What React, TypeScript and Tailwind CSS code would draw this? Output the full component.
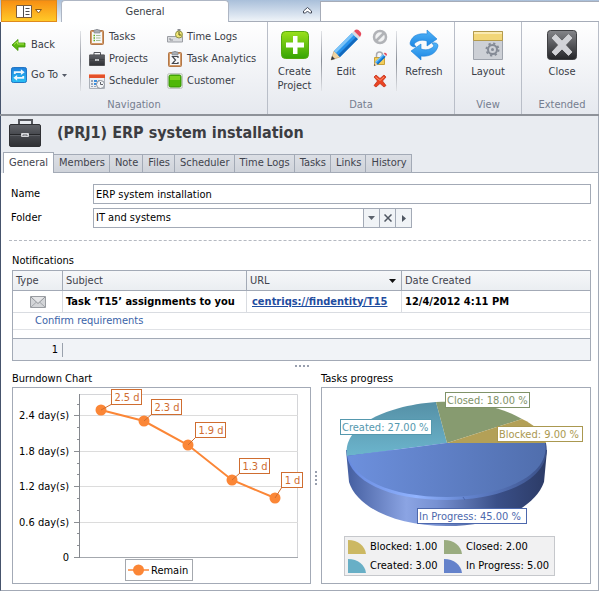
import React, { useState } from 'react'

const remaining = [2.5, 2.3, 1.9, 1.3, 1]
const burndown = [
  { x: 88, lx: 98, ly: 1, w: 30 },
  { x: 131, lx: 138, ly: 11, w: 30 },
  { x: 175, lx: 182, ly: 34, w: 30 },
  { x: 219, lx: 226, ly: 70, w: 30 },
  { x: 262, lx: 268, ly: 84, w: 21 },
]
const ticks = [2.4, 1.8, 1.2, 0.6, 0]
const minorTicks = [2.6, 2.2, 2, 1.6, 1.4, 1, 0.8, 0.4, 0.2]
const pages = ['General', 'Members', 'Note', 'Files', 'Scheduler', 'Time Logs', 'Tasks', 'Links', 'History']

const toY = (v: number) => Math.round(169 - v * 59)

const BackIcon = () => (
  <svg width="16" height="16" viewBox="0 0 16 16" className="shrink-0">
    <path d="M1 8 7 2.500V6h7v4H7v3.500Z" fill="#5cb811" stroke="#3d9200" strokeWidth=".8" />
    <path d="M3 7.500 6.500 4.500V7H13" fill="none" stroke="#a6e34f" />
  </svg>
)

const GoToIcon = () => (
  <svg width="16" height="16" viewBox="0 0 17 17" className="shrink-0">
    <defs>
      <linearGradient id="goto" x2="0" y2="1">
        <stop stopColor="#1f7fdc" />
        <stop offset="1" stopColor="#27c0f5" />
      </linearGradient>
    </defs>
    <rect x=".5" y=".5" width="16" height="16" rx="2" fill="url(#goto)" stroke="#1b6fc0" />
    <path d="M3 7.500V4.500h7.500V2.500L14.500 5.500l-4 3v-2H5v1zM14 9.500v3H6.500v2l-4-3 4-3v2H12v-1z" fill="#eef6fc" />
  </svg>
)

const TasksIcon = ({ sum }: { sum?: boolean }) => (
  <svg width="16" height="16" viewBox="0 0 16 16" className="shrink-0">
    <rect x="1.500" y="1.500" width="13" height="14" rx="1" fill="#d39a68" stroke="#b27748" />
    <path d="M3 3h10v11H3z" fill="#f6f7f9" />
    <path d="M5 1h2V0h2v1h2v3H5z" fill="#a9adb3" stroke="#7d8188" strokeWidth=".6" />
    {sum ? (
      <path d="M11 7V5.500H5.500L8.500 9l-3 3.500H11V11" fill="none" stroke="#44474e" strokeWidth="1.200" />
    ) : (
      <>
        <path d="M4.500 6.500h1.500M4.500 9h1.500M4.500 11.500h1.500" stroke="#5fae1c" strokeWidth="1.500" />
        <path d="M7 6.500h4.500M7 9h4.500M7 11.500h4.500" stroke="#a6bf97" />
      </>
    )}
  </svg>
)

const CaseIcon = ({ className }: { className: string }) => (
  <svg viewBox="0 0 32 28" className={className}>
    <defs>
      <linearGradient id="case" x2="0" y2="1">
        <stop stopColor="#62646a" />
        <stop offset=".5" stopColor="#45474c" />
        <stop offset="1" stopColor="#2f3034" />
      </linearGradient>
    </defs>
    <path d="M10 6V1h13v5" fill="none" stroke="#55575d" strokeWidth="2" />
    <rect x=".5" y="5.500" width="31" height="22" rx="1.500" fill="url(#case)" stroke="#303135" />
    <path d="M1 15.500h11M20 15.500h11" stroke="#26272a" />
    <path d="M1 16.500h11M20 16.500h11" stroke="#6c6e74" strokeWidth=".6" />
    <rect x="12" y="14" width="8" height="4" rx="1" fill="#d6d7da" />
    <path d="M14 17v-1h4v1" fill="none" stroke="#66686e" />
  </svg>
)

const SchedulerIcon = () => (
  <svg width="16" height="16" viewBox="0 0 16 16" className="shrink-0">
    <path d="M.5 1.500h15v14H.5z" fill="#eceef1" stroke="#abb0b8" />
    <path d="M0 1h16v4H0z" fill="#e4512b" />
    <path d="M0 1h16v1H0z" fill="#f59777" />
    <path d="M2 7h2v2H2zm7 0h2v2H9zM2 10h2v2H2zM2 13h2v1H2zM5 13h2v1H5z" fill="#9ba5b5" />
    <path d="M5 7h3v2H5zM5 10h3v2H5z" fill="#3e8fdd" />
    <circle cx="11.500" cy="11.500" r="4" fill="#f4f5f7" stroke="#8b9099" />
    <path d="M11.500 9v2.500H14" fill="none" stroke="#60646c" />
  </svg>
)

const TimeLogsIcon = () => (
  <svg width="16" height="16" viewBox="0 0 16 16" className="shrink-0">
    <path d="M.5 7.500h15v5.500H.5z" fill="#dadcdf" stroke="#9a9da3" />
    <path d="M3 9v2h3" fill="none" stroke="#8b8e94" />
    <path d="M10.500 0h3v2h-3z" fill="#8a8d93" />
    <circle cx="12" cy="5.500" r="3.500" fill="#f1e774" stroke="#8f9149" />
    <path d="M12 3v3h2.500" fill="none" stroke="#54561f" />
  </svg>
)

const CustomerIcon = () => (
  <svg width="16" height="16" viewBox="0 0 16 16" className="shrink-0">
    <rect x=".5" y=".5" width="15" height="15" rx="2" fill="#e9ebe8" stroke="#c1c6c1" />
    <rect x="2" y="2" width="12" height="12" rx="1.500" fill="#4fb708" stroke="#329000" />
    <path d="M3 3h10v4H3z" fill="#7ad01d" />
  </svg>
)

const CreateIcon = () => (
  <svg width="28" height="28" viewBox="0 0 28 28">
    <defs>
      <linearGradient id="create" x2="0" y2="1">
        <stop stopColor="#9be01c" />
        <stop offset="1" stopColor="#35a404" />
      </linearGradient>
    </defs>
    <rect x=".5" y=".5" width="27" height="27" rx="4" fill="url(#create)" stroke="#55a80f" />
    <path d="M12 5h4.500v6.500H23v5h-6.500V23H12v-6.500H5v-5h7z" fill="#fff" />
  </svg>
)

const PencilShape = () => (
  <>
    <path d="M1 31 4 22 10 28z" fill="#f0d3a1" stroke="#b78e57" strokeWidth=".5" />
    <path d="m1 31 1-4 3 3z" fill="#353840" />
    <path d="M4 22 22 4l6 6-18 18z" fill="#2793ec" />
    <path d="M4 22 22 4l2 2L6 24z" fill="#7cc4f8" />
    <path d="m8 26 18-18 2 2-18 18z" fill="#1269be" />
    <path d="m22 4 2-2 6 6-2 2z" fill="#d8dbe0" />
    <path d="m24 2 1.500-1.300a3 3 0 0 1 3 .3l2 2a3 3 0 0 1 .5 3L30 8z" fill="#e64a5c" />
  </>
)

const EditIcon = () => (
  <svg width="32" height="32" viewBox="0 0 32 32"><PencilShape /></svg>
)

const ForbidIcon = () => (
  <svg width="16" height="16" viewBox="0 0 16 16">
    <circle cx="8" cy="8" r="6" fill="#f1f2f3" stroke="#b1b3b7" strokeWidth="2.500" />
    <path d="m12 4-8 8" stroke="#b1b3b7" strokeWidth="2.500" />
  </svg>
)

const LockEditIcon = () => (
  <svg width="16" height="16" viewBox="0 0 16 16">
    <path d="M4.500 7V4a3 3 0 0 1 6 0v3" fill="none" stroke="#a9abb0" strokeWidth="1.500" />
    <path d="M2.500 6.500h10v7h-10z" fill="#f2cd5c" stroke="#c7a13b" />
    <g transform="translate(1.500 1.500) scale(.43)"><PencilShape /></g>
  </svg>
)

const DeleteIcon = () => (
  <svg width="16" height="16" viewBox="0 0 16 16">
    <path d="m2 4 2-2 4 3.500L12 2l2 2-3.500 4L14 12.500 12 14l-4-3.500L4 14l-2-1.500L5.500 8z" fill="#ea4423" stroke="#bd2610" strokeWidth=".7" />
    <path d="m3.500 4 4.500 3.500L12 4" fill="none" stroke="#fb8d6b" />
  </svg>
)

const RefreshIcon = () => (
  <svg width="30" height="32" viewBox="0 0 30 32">
    <defs>
      <linearGradient id="refresh" x2="0" y2="1">
        <stop stopColor="#52b4f7" />
        <stop offset="1" stopColor="#1b86e4" />
      </linearGradient>
    </defs>
    <g fill="url(#refresh)" stroke="#1c7fd6" strokeWidth=".6">
      <path d="M1 14C3 6 10 4 18 5V1l10 9-10 7v-5C12 10 8 12 5 15L7 18Q1 18 1 14z" />
      <path d="M29 17c-2 8-9 11-17 10v4L2 22l10-7v5c6 2 10 0 13-3L23 14Q29 13 29 17z" />
    </g>
  </svg>
)

const LayoutIcon = () => (
  <svg width="30" height="30" viewBox="0 0 30 30">
    <path d="M.5 1.500h29v28H.5z" fill="#cdd0d6" stroke="#9ea3ac" />
    <path d="M.5 1.500h29v9H.5z" fill="#f2d678" stroke="#b49b4c" />
    <path d="M1 2h28v2H1z" fill="#faeab1" />
    <circle cx="19.500" cy="19.500" r="4.500" fill="none" stroke="#858b96" strokeWidth="2" />
    <circle cx="19.500" cy="19.500" r="6" fill="none" stroke="#858b96" strokeWidth="2" strokeDasharray="2.200 2.500" />
    <circle cx="19.500" cy="19.500" r="1.500" fill="#858b96" />
  </svg>
)

const CloseIcon = () => (
  <svg width="30" height="30" viewBox="0 0 30 30">
    <defs>
      <linearGradient id="close" x2="0" y2="1">
        <stop stopColor="#85868a" />
        <stop offset=".5" stopColor="#55565a" />
        <stop offset="1" stopColor="#242528" />
      </linearGradient>
    </defs>
    <rect x=".5" y=".5" width="29" height="29" rx="3" fill="url(#close)" stroke="#3f4043" />
    <path d="m5 8 3.500-3.500L15 11l6.500-6.500L25 8l-6.500 7 6.500 7-3.500 3.500L15 19l-6.500 6.500L5 22l6.500-7z" fill="#d2d3d8" stroke="#ececef" strokeWidth=".6" />
  </svg>
)

const NavButton = ({ icon, label }: { icon: React.ReactNode; label: string }) => (
  <button className="flex h-5 items-center gap-1 whitespace-nowrap text-left">
    {icon}
    {label}
  </button>
)

const BigButton = ({ icon, label, className = '' }: { icon: React.ReactNode; label: string; className?: string }) => (
  <button className={`flex flex-col items-center text-center leading-[14px] ${className}`}>
    <span className="mb-1 mt-[2px] flex h-8 items-center">{icon}</span>
    {label}
  </button>
)

const Group = ({ title, className, children }: { title: string; className: string; children: React.ReactNode }) => (
  <section className={`flex flex-col border-[#b9bec8] ${className}`}>
    <div className="flex flex-1 pt-[5px]">{children}</div>
    <h2 className="h-[17px] text-center leading-4 text-[#757d8f]">{title}</h2>
  </section>
)

const Separator = () => <div className="mt-1 h-[60px] w-px shrink-0 bg-linear-to-b from-[#e2e4e8] via-[#8b8f98] to-[#e2e4e8]" />

const Ribbon = () => (
  <header>
    <div className="flex h-[22px] bg-linear-to-b from-[#a9bfda] to-[#f2f6fa]">
      <button
        aria-label="Application menu"
        className="ml-px flex w-14 items-center justify-center gap-[3px] border border-[#e08a1c] bg-linear-to-b from-[#f78f13] to-[#ffc928]"
      >
        <svg width="16" height="13" viewBox="0 0 16 13">
          <path d="M.5.5h15v12H.5z" fill="#fff" stroke="#7b5d3c" />
          <path d="M7.500 1v11M9.500 3.500h4M9.500 6.500h4M9.500 9.500h4" stroke="#4d4d50" />
        </svg>
        <svg width="7" height="5" viewBox="0 0 7 5"><path d="M.5.5h6l-3 3.500z" fill="#fff" stroke="#8a5a18" /></svg>
      </button>
      <button className="ml-1 w-[168px] rounded-t-sm border border-b-0 border-[#aeb6c4] bg-white pt-[2px] text-[#3b3f49]">General</button>
      <div className="flex flex-1 border-b border-[#a6acb8]">
        <div className="flex w-[91px] items-center justify-end pr-2">
          <button aria-label="Collapse ribbon">
            <svg width="9" height="7" viewBox="0 0 9 7">
              <path d="m.5 4 4-3.500 4 3.500v2h-2l-2-2-2 2h-2z" fill="#fff" stroke="#444b5a" />
            </svg>
          </button>
        </div>
        <div className="mt-px flex-1 border-l border-t border-[#a6acb8] bg-white" />
      </div>
    </div>
    <div className="flex h-[94px] border-b-2 border-[#8e9299] bg-linear-to-b from-white to-[#e6e9ef] text-[#3a3e48]">
      <Group title="Navigation" className="w-[268px] shrink-0 border-l border-r border-l-[#46546c]">
        <div className="flex w-[79px] flex-col gap-[10px] pl-[10px] pt-2">
          <NavButton icon={<BackIcon />} label="Back" />
          <button className="flex h-5 items-center gap-1 whitespace-nowrap">
            <GoToIcon />
            Go To
            <svg width="5" height="3" viewBox="0 0 5 3"><path d="M0 0h5L2.500 3z" fill="#555b68" /></svg>
          </button>
        </div>
        <Separator />
        <div className="grid flex-1 grid-cols-[78px_1fr] content-start gap-y-[2px] pl-2">
          <NavButton icon={<TasksIcon />} label="Tasks" />
          <NavButton icon={<TimeLogsIcon />} label="Time Logs" />
          <NavButton icon={<CaseIcon className="h-[14px] w-4 shrink-0" />} label="Projects" />
          <NavButton icon={<TasksIcon sum />} label="Task Analytics" />
          <NavButton icon={<SchedulerIcon />} label="Scheduler" />
          <NavButton icon={<CustomerIcon />} label="Customer" />
        </div>
      </Group>
      <Group title="Data" className="w-[187px] shrink-0 border-r">
        <BigButton className="w-[53px]" icon={<CreateIcon />} label="Create Project" />
        <Separator />
        <BigButton className="w-12" icon={<EditIcon />} label="Edit" />
        <div className="flex w-[26px] flex-col gap-[6px] pl-[2px] pt-[2px]">
          <button aria-label="Cancel"><ForbidIcon /></button>
          <button aria-label="Lock"><LockEditIcon /></button>
          <button aria-label="Delete"><DeleteIcon /></button>
        </div>
        <Separator />
        <BigButton className="w-[54px]" icon={<RefreshIcon />} label="Refresh" />
      </Group>
      <Group title="View" className="w-[67px] shrink-0 border-r">
        <BigButton className="flex-1" icon={<LayoutIcon />} label="Layout" />
      </Group>
      <Group title="Extended" className="flex-1 border-r pl-1">
        <BigButton className="flex-1" icon={<CloseIcon />} label="Close" />
      </Group>
    </div>
  </header>
)

const Notifications = () => (
  <section>
    <h2 className="h-[15px] leading-[15px]">Notifications</h2>
    <div className="mt-[2px] border border-[#a3aab6]">
      <table className="w-full table-fixed border-separate border-spacing-0 leading-4">
        <colgroup>
          <col className="w-[50px]" />
          <col className="w-[184px]" />
          <col className="w-[155px]" />
          <col />
        </colgroup>
        <thead>
          <tr className="h-5 bg-linear-to-b from-[#f6f7f9] to-[#eaedf1] text-left text-[#3f434d]">
            <th className="border-b border-r border-[#a3aab6] px-[3px] py-0 font-normal">Type</th>
            <th className="border-b border-r border-[#a3aab6] px-[3px] py-0 font-normal">Subject</th>
            <th className="border-b border-r border-[#a3aab6] px-[3px] py-0 font-normal">
              <div className="flex items-center justify-between pr-[2px]">
                URL
                <svg width="7" height="4" viewBox="0 0 7 4"><path d="M0 0h7L3.500 4z" fill="#111" /></svg>
              </div>
            </th>
            <th className="border-b border-[#a3aab6] px-[3px] py-0 font-normal">Date Created</th>
          </tr>
        </thead>
        <tbody>
          <tr className="h-[22px] whitespace-nowrap font-bold">
            <td className="border-b border-r border-[#d9dce1] p-0">
              <svg width="16" height="12" viewBox="0 0 16 12" className="mx-auto">
                <path d="M.5.5h15v11H.5z" fill="#d3d5d8" stroke="#999ca1" />
                <path d="m1 11 5.500-5M15 11 9.500 6" stroke="#a3a6ab" />
                <path d="m1 1 7 6.500L15 1" fill="#e5e6e8" stroke="#909398" />
              </svg>
            </td>
            <td className="border-b border-r border-[#d9dce1] px-[3px] py-0">Task ‘T15’ assignments to you</td>
            <td className="border-b border-r border-[#d9dce1] px-[5px] py-0">
              <a href="#T15" className="text-[#1f4da0] underline">centriqs://findentity/T15</a>
            </td>
            <td className="border-b border-[#d9dce1] px-[3px] py-0">12/4/2012 4:11 PM</td>
          </tr>
          <tr className="h-[17px]">
            <td colSpan={4} className="border-b border-[#e0e2e6] py-0 pl-[22px] text-[#3a63a8]">Confirm requirements</td>
          </tr>
          <tr className="h-2"><td colSpan={4} className="p-0" /></tr>
        </tbody>
        <tfoot>
          <tr className="h-[22px] bg-[#f1f3f7]">
            <td className="border-t border-[#a3aab6] p-0">
              <div className="h-[14px] border-r border-[#9aa1ad] pr-1 text-right leading-[14px]">1</div>
            </td>
            <td colSpan={3} className="border-t border-[#a3aab6] p-0" />
          </tr>
        </tfoot>
      </table>
    </div>
  </section>
)

const BurndownChart = () => (
  <svg viewBox="0 0 297 195" className="block w-full" role="img" aria-label="Burndown Chart">
    <path d="M66.500 6.500h218v163" fill="none" stroke="#d4d5d8" />
    {ticks.map(t => (
      <g key={t}>
        <path d={`M67 ${toY(t) + 0.5}h218`} stroke={t ? '#dcdcdc' : '#a4a8ae'} />
        <path d={`M61 ${toY(t) + 0.5}h5`} stroke="#8c8f94" />
        <text x="56" y={toY(t) + 4} textAnchor="end">{t ? `${t} day(s)` : '0'}</text>
      </g>
    ))}
    {minorTicks.map(t => <path key={t} d={`M64 ${toY(t) + 0.5}h3`} stroke="#8c8f94" />)}
    <path d="M66.500 6v164" stroke="#85888e" />
    <polyline points={burndown.map((p, i) => `${p.x},${toY(remaining[i])}`).join(' ')} fill="none" stroke="#fb8636" strokeWidth="2" />
    {burndown.map((p, i) => (
      <g key={p.x}>
        <circle cx={p.x} cy={toY(remaining[i])} r="5.500" fill="#fb8636" />
        <path d={`M${p.x} ${toY(remaining[i])}L${p.lx + 1} ${p.ly + 15}`} stroke="#cf6d30" />
        <rect x={p.lx + 0.5} y={p.ly + 0.5} width={p.w} height="15" fill="#fff" stroke="#cf6d30" />
        <text x={p.lx + 1 + p.w / 2} y={p.ly + 12} textAnchor="middle" fill="#cf6d30">{remaining[i]} d</text>
      </g>
    ))}
    <rect x="112.500" y="171.500" width="67" height="21" fill="#fff" stroke="#a4a8ae" />
    <path d="M115 182h21" stroke="#fb8636" strokeWidth="1.500" />
    <circle cx="125.500" cy="182" r="5.500" fill="#fb8636" />
    <text x="138" y="186">Remain</text>
  </svg>
)

const slices = [
  { text: 'Closed: 18.00 %', x: 123, y: 4, w: 84, color: '#7f9268' },
  { text: 'Created: 27.00 %', x: 18, y: 31, w: 91, color: '#5598ae' },
  { text: 'Blocked: 9.00 %', x: 175, y: 38, w: 85, color: '#aa9850' },
  { text: 'In Progress: 45.00 %', x: 95, y: 120, w: 109, color: '#4d68ad' },
]

const legend = [
  ['Blocked: 1.00', '#ccb863'],
  ['Closed: 2.00', '#9aac80'],
  ['Created: 3.00', '#68afc6'],
  ['In Progress: 5.00', '#6482cb'],
]

const ProgressChart = () => (
  <div>
    <svg viewBox="0 0 268 148" className="block w-full" role="img" aria-label="Tasks progress">
      <defs>
        <linearGradient id="side">
          <stop stopColor="#435d9f" />
          <stop offset=".3" stopColor="#8ba4e3" />
          <stop offset=".45" stopColor="#7791d2" />
          <stop offset=".75" stopColor="#3a4f88" />
          <stop offset="1" stopColor="#2c3b66" />
        </linearGradient>
        <linearGradient id="front" x2="1" y2="0">
          <stop stopColor="#6d90dd" />
          <stop offset="1" stopColor="#506ead" />
        </linearGradient>
        <linearGradient id="rim" x2="1" y2="0">
          <stop stopColor="#6689df" />
          <stop offset=".35" stopColor="#92b4ff" />
          <stop offset=".6" stopColor="#6384cf" />
          <stop offset="1" stopColor="#3a5088" />
        </linearGradient>
        <linearGradient id="created" x2="0" y2="1">
          <stop stopColor="#5590a6" />
          <stop offset="1" stopColor="#6cb5cd" />
        </linearGradient>
      </defs>
      <path d="M24 62 27 94C35 120 75 138 125 138S213 120 222 94L225 62Z" fill="url(#side)" />
      <path d="M125 55 25 68C20 40 60 18 114 14Z" fill="url(#created)" />
      <path d="M125 55 114 14C149 12 180 19 200 31Z" fill="#879b70" />
      <path d="M125 55 200 31C213 37 221 45 224 55Z" fill="#b3a057" />
      <path d="M125 55H224C231 88 186 112 125 112S29 92 25 68Z" fill="url(#rim)" />
      <path d="M125 55H223C229 85 184 109 125 109S32 90 26 68Z" fill="url(#front)" />
      <path d="m141 109 2 3" stroke="#4966ad" />
      {slices.map(s => (
        <g key={s.text}>
          <rect x={s.x + 0.5} y={s.y + 0.5} width={s.w} height="15" fill="#fff" stroke={s.color} />
          <text x={s.x + 2} y={s.y + 12} fill={s.color}>{s.text}</text>
        </g>
      ))}
    </svg>
    <ul className="mb-[7px] ml-[22px] grid h-10 w-[211px] grid-cols-[96px_1fr] border border-[#c6c8cc] bg-[#f1f1f2] pl-[3px] leading-[18px]">
      {legend.map(([text, color]) => (
        <li key={text} className="flex items-center gap-1 whitespace-nowrap">
          <svg width="18" height="14" viewBox="0 0 18 14" className="shrink-0"><path d="M0 0C10 0 17 6 18 14H0z" fill={color} /></svg>
          {text}
        </li>
      ))}
    </ul>
  </div>
)

export default function App() {
  const [page, setPage] = useState('General')
  const [name, setName] = useState('ERP system installation')

  return (
    <div className="bg-white font-['DejaVu_Sans_Condensed','DejaVu_Sans',sans-serif] text-[11px] text-black">
      <Ribbon />
      <main className="border-b border-l border-r border-b-[#a3aab6] border-l-[#46546c] border-r-[#a3aab6]">
        <div className="bg-[#e9ecf1]">
          <div className="flex h-9 items-center gap-4 pb-[2px] pl-2">
            <CaseIcon className="h-7 w-8" />
            <h1 className="text-[16px] font-bold leading-5 text-[#3c3d42]">(PRJ1) ERP system installation</h1>
          </div>
          <nav className="flex h-[21px] items-end pl-[2px] text-[#3f434d]">
            {pages.map(p => (
              <button
                key={p}
                onClick={() => setPage(p)}
                className={
                  p === page
                    ? 'h-[21px] border border-b-0 border-[#a3aab6] bg-white px-[5px]'
                    : 'h-[19px] border border-l-0 border-[#a3aab6] bg-linear-to-b from-[#dcdfe5] to-[#cfd3da] pl-[5px] pr-1'
                }
              >
                {p}
              </button>
            ))}
            <div className="h-px flex-1 bg-[#a3aab6]" />
          </nav>
        </div>
        <div className="pb-[6px] pl-2 pr-[7px]">
          <form className="grid grid-cols-[82px_1fr] items-center gap-y-1 border-b border-dashed border-[#b5b9c1] pb-3 pl-[2px] pt-[11px]">
            <label htmlFor="name">Name</label>
            <input id="name" value={name} onChange={e => setName(e.target.value)} className="h-5 w-full border border-[#a3aab6] bg-white px-[2px]" />
            <label htmlFor="folder">Folder</label>
            <div className="flex h-5 w-[319px] border border-[#a3aab6]">
              <select id="folder" className="flex-1 appearance-none px-[2px]">
                <option>IT and systems</option>
              </select>
              <button type="button" aria-label="Open list" className="flex w-4 items-center justify-center border-l border-[#a3aab6] bg-[#f0f3f6]">
                <svg width="7" height="4" viewBox="0 0 7 4"><path d="M0 0h7L3.500 4z" fill="#5b626c" /></svg>
              </button>
              <button type="button" aria-label="Clear" className="flex w-4 items-center justify-center border-l border-[#a3aab6] bg-[#f0f3f6]">
                <svg width="8" height="8" viewBox="0 0 8 8"><path d="m.5.5 7 7m0-7-7 7" stroke="#4f5661" strokeWidth="1.500" /></svg>
              </button>
              <button type="button" aria-label="Open folder" className="flex w-4 items-center justify-center border-l border-[#a3aab6] bg-[#f0f3f6]">
                <svg width="4" height="7" viewBox="0 0 4 7"><path d="M0 0v7l4-3.500z" fill="#4f5661" /></svg>
              </button>
            </div>
          </form>
          <div className="pl-[3px] pt-3">
            <Notifications />
            <div className="flex h-[10px] items-center justify-center gap-[2px]">
              {[0, 1, 2, 3].map(i => <i key={i} className="size-[2px] bg-[#989fae]" />)}
            </div>
            <div className="flex">
              <section className="flex-[299_1_0%]">
                <h2 className="h-4 leading-[15px]">Burndown Chart</h2>
                <div className="border border-[#a3aab6]"><BurndownChart /></div>
              </section>
              <div className="flex w-[10px] flex-col items-center justify-center gap-[2px]">
                {[0, 1, 2, 3].map(i => <i key={i} className="size-[2px] bg-[#989fae]" />)}
              </div>
              <section className="flex-[270_1_0%]">
                <h2 className="h-4 leading-[15px]">Tasks progress</h2>
                <div className="border border-[#a3aab6]"><ProgressChart /></div>
              </section>
            </div>
          </div>
        </div>
      </main>
    </div>
  )
}
